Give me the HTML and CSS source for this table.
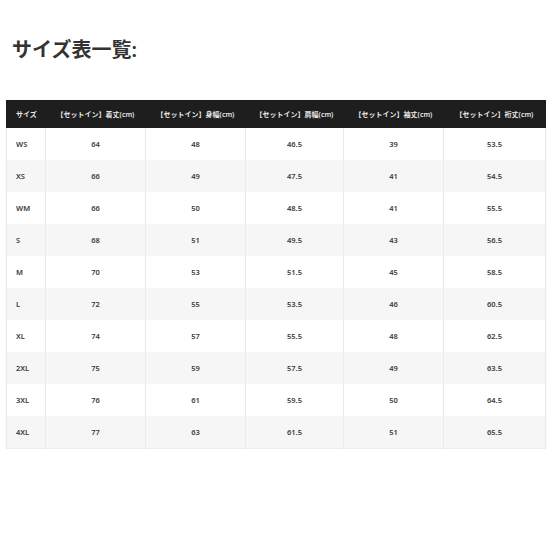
FILE: index.html
```html
<!DOCTYPE html>
<html lang="ja">
<head>
<meta charset="utf-8">
<link rel="stylesheet" href="styles.css">
</head>
<body>
<h2 class="title">サイズ表一覧:</h2>
<table class="size-table">
  <colgroup>
    <col class="c0"><col class="c1"><col class="c2"><col class="c3"><col class="c4"><col class="c5">
  </colgroup>
  <thead>
    <tr>
      <th class="first">サイズ</th>
      <th>【セットイン】着丈(cm)</th>
      <th>【セットイン】身幅(cm)</th>
      <th>【セットイン】肩幅(cm)</th>
      <th>【セットイン】袖丈(cm)</th>
      <th>【セットイン】裄丈(cm)</th>
    </tr>
  </thead>
  <tbody>
    <tr><td class="first">WS</td><td>64</td><td>48</td><td>46.5</td><td>39</td><td>53.5</td></tr>
    <tr><td class="first">XS</td><td>66</td><td>49</td><td>47.5</td><td>41</td><td>54.5</td></tr>
    <tr><td class="first">WM</td><td>66</td><td>50</td><td>48.5</td><td>41</td><td>55.5</td></tr>
    <tr><td class="first">S</td><td>68</td><td>51</td><td>49.5</td><td>43</td><td>56.5</td></tr>
    <tr><td class="first">M</td><td>70</td><td>53</td><td>51.5</td><td>45</td><td>58.5</td></tr>
    <tr><td class="first">L</td><td>72</td><td>55</td><td>53.5</td><td>46</td><td>60.5</td></tr>
    <tr><td class="first">XL</td><td>74</td><td>57</td><td>55.5</td><td>48</td><td>62.5</td></tr>
    <tr><td class="first">2XL</td><td>75</td><td>59</td><td>57.5</td><td>49</td><td>63.5</td></tr>
    <tr><td class="first">3XL</td><td>76</td><td>61</td><td>59.5</td><td>50</td><td>64.5</td></tr>
    <tr><td class="first">4XL</td><td>77</td><td>63</td><td>61.5</td><td>51</td><td>65.5</td></tr>
  </tbody>
</table>
</body>
</html>
```

FILE: styles.css
```css
html, body {
  margin: 0;
  padding: 0;
  background: #ffffff;
}
body {
  font-family: "Noto Sans", "Noto Sans CJK JP", sans-serif;
  color: #333333;
}
.title {
  margin: 37px 0 0 12px;
  font-size: 20px;
  line-height: 26px;
  font-weight: 600;
  color: #333333;
  letter-spacing: 0;
}
.size-table {
  margin: 37px 0 0 6px;
  width: 539px;
  border-collapse: collapse;
  table-layout: fixed;
  border: 1px solid #ececec;
  box-shadow: 0 0 2px rgba(0,0,0,0.08);
}
.c0 { width: 39px; }
.c1 { width: 100px; }
.c2 { width: 100px; }
.c3 { width: 98px; }
.c4 { width: 100px; }
.c5 { width: 102px; }
.size-table th {
  background: #1e1e1e;
  color: #e8e8e8;
  font-size: 7px;
  font-weight: 600;
  height: 26px;
  padding: 0 2px;
  text-align: center;
  white-space: nowrap;
  border: 1px solid #1e1e1e;
}
.size-table td {
  height: 32px;
  padding: 0;
  font-size: 7.5px;
  font-weight: 600;
  color: #3a3a3a;
  text-align: center;
  border-left: 1px solid #eaeaea;
  border-right: 1px solid #eaeaea;
}
.size-table th.first,
.size-table td.first {
  text-align: left;
  padding-left: 9px;
}
.size-table tbody tr:nth-child(even) td {
  background: #f6f6f6;
}
```
